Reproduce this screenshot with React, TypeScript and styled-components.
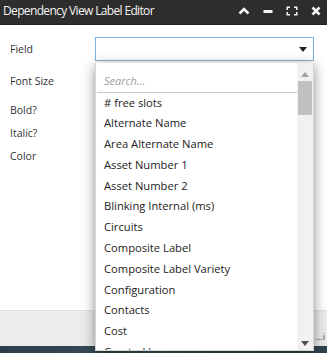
import React from "react";
import styled, { createGlobalStyle } from "styled-components";

const GlobalStyle = createGlobalStyle`
  html, body {
    margin: 0;
    padding: 0;
    height: 100%;
    overflow: hidden;
  }
  #root {
    height: 100%;
  }
  body {
    font-family: "Open Sans", "Noto Sans", sans-serif;
    color: #333;
  }
`;

const fields = [
  "# free slots",
  "Alternate Name",
  "Area Alternate Name",
  "Asset Number 1",
  "Asset Number 2",
  "Blinking Internal (ms)",
  "Circuits",
  "Composite Label",
  "Composite Label Variety",
  "Configuration",
  "Contacts",
  "Cost",
  "Created by",
];

const formRows = [
  { label: "Field", mt: 0, h: 24 },
  { label: "Font Size", mt: 9, h: 23 },
  { label: "Bold?", mt: 6, h: 23 },
  { label: "Italic?", mt: 0, h: 23 },
  { label: "Color", mt: 0, h: 23 },
];

function App() {
  return (
    <>
      <GlobalStyle />
      <Window>
        <TitleBar>
          <Title>Dependency View Label Editor</Title>
          <TitleIcons>
            <IconButton>
              <svg width="12" height="10" viewBox="0 0 12 10">
                <path d="M1.5 7.5 L6 3 L10.5 7.5" fill="none" stroke="#f2f2f2" strokeWidth="2.6" />
              </svg>
            </IconButton>
            <IconButton>
              <svg width="10" height="10" viewBox="0 0 10 10">
                <rect x="0.5" y="4" width="9" height="3" fill="#f2f2f2" />
              </svg>
            </IconButton>
            <IconButton>
              <svg width="12" height="10" viewBox="0 0 12 10">
                <path d="M0.5 0.5h3.5v1.5h-2v2h-1.5z M11.5 0.5h-3.5v1.5h2v2h1.5z M0.5 9.5h3.5v-1.5h-2v-2h-1.5z M11.5 9.5h-3.5v-1.5h2v-2h1.5z" fill="#f2f2f2" />
              </svg>
            </IconButton>
            <IconButton>
              <svg width="10" height="10" viewBox="0 0 10 10">
                <path d="M1.5 1.5 L8.5 8.5 M8.5 1.5 L1.5 8.5" stroke="#f2f2f2" strokeWidth="2.6" />
              </svg>
            </IconButton>
          </TitleIcons>
        </TitleBar>

        <Body>
          <Form>
            {formRows.map((r, i) => (
              <FormRow key={r.label} $mt={r.mt} $h={r.h}>
                <Label>{r.label}</Label>
                {i === 0 && (
                  <SelectBox>
                    <svg width="8" height="5" viewBox="0 0 8 5">
                      <path d="M0 0h8L4 5z" fill="#222" />
                    </svg>
                  </SelectBox>
                )}
              </FormRow>
            ))}
          </Form>

          <Dropdown>
            <ListArea>
              <SearchWrap>
                <SearchInput placeholder="Search..." />
              </SearchWrap>
              <Options>
                {fields.map((f) => (
                  <Option key={f}>{f}</Option>
                ))}
              </Options>
            </ListArea>
            <Scrollbar>
              <ScrollArrow>
                <svg width="8" height="5" viewBox="0 0 8 5">
                  <path d="M0 5h8L4 0z" fill="#a3a3a3" />
                </svg>
              </ScrollArrow>
              <Thumb />
              <TrackRest />
              <ScrollArrow>
                <svg width="8" height="5" viewBox="0 0 8 5">
                  <path d="M0 0h8L4 5z" fill="#505050" />
                </svg>
              </ScrollArrow>
            </Scrollbar>
          </Dropdown>
        </Body>

        <Footer>
          <FooterText>...i</FooterText>
        </Footer>
        <Taskbar />
      </Window>
    </>
  );
}

const Window = styled.div`
  height: 100%;
  display: flex;
  flex-direction: column;
  background: #fff;
`;

const TitleBar = styled.div`
  height: 25px;
  flex: none;
  display: flex;
  align-items: center;
  justify-content: space-between;
  background: #2d2d2d;
  border-bottom: 1px solid #1f1f1f;
  box-sizing: border-box;
  padding: 0 5px 0 3px;
`;

const Title = styled.div`
  color: #f4f4f4;
  font-size: 12px;
  letter-spacing: -0.65px;
  margin-top: -3px;
`;

const TitleIcons = styled.div`
  display: flex;
  align-items: center;
  gap: 12px;
  margin-top: -2px;
`;

const IconButton = styled.div`
  display: flex;
  align-items: center;
  justify-content: center;
  width: 12px;
  height: 12px;
`;

const Body = styled.div`
  flex: 1;
  position: relative;
  padding: 12px 13px 0 10px;
`;

const Form = styled.div`
  display: flex;
  flex-direction: column;
`;

const FormRow = styled.div<{ $mt: number; $h: number }>`
  display: flex;
  align-items: center;
  margin-top: ${(p) => p.$mt}px;
  height: ${(p) => p.$h}px;
`;

const Label = styled.div`
  width: 85px;
  font-size: 10.5px;
  color: #333;
  margin-top: -1px;
`;

const SelectBox = styled.div`
  flex: 1;
  height: 24px;
  box-sizing: border-box;
  border: 1px solid #7eb2dc;
  display: flex;
  align-items: center;
  justify-content: flex-end;
  padding-right: 6px;
`;

const Dropdown = styled.div`
  position: absolute;
  left: 95px;
  top: 38px;
  width: 219px;
  height: 288px;
  box-sizing: border-box;
  background: #fff;
  border: 1px solid #d6d6d6;
  border-top: none;
  display: flex;
  box-shadow: 0 3px 12px rgba(0, 0, 0, 0.45);
  overflow: hidden;
  z-index: 2;
`;

const ListArea = styled.div`
  flex: 1;
  display: flex;
  flex-direction: column;
  overflow: hidden;
  padding-top: 5px;
`;

const SearchWrap = styled.div`
  padding: 0 0 0 1px;
`;

const SearchInput = styled.input`
  width: 100%;
  box-sizing: border-box;
  height: 23px;
  border: none;
  border-bottom: 1px solid #c8c8c8;
  outline: none;
  font-family: "Open Sans", sans-serif;
  font-size: 11px;
  font-style: italic;
  padding: 0 0 0 7px;
  &::placeholder {
    color: #a0a0a0;
  }
`;

const Options = styled.div`
  display: flex;
  flex-direction: column;
`;

const Option = styled.div`
  height: 20.8px;
  line-height: 20.8px;
  padding-left: 8px;
  font-size: 11.2px;
  color: #222;
  white-space: nowrap;
`;

const Scrollbar = styled.div`
  width: 16px;
  flex: none;
  background: #f1f1f1;
  display: flex;
  flex-direction: column;
  align-items: center;
  padding-top: 4px;
`;

const ScrollArrow = styled.div`
  height: 14px;
  display: flex;
  align-items: center;
  justify-content: center;
`;

const Thumb = styled.div`
  width: 14px;
  height: 34px;
  background: #c1c1c1;
`;

const TrackRest = styled.div`
  flex: 1;
`;

const Footer = styled.div`
  height: 32px;
  flex: none;
  background: #ececec;
  border-top: 1px solid #e0e0e0;
  display: flex;
  align-items: flex-end;
  justify-content: flex-end;
  padding: 0 2px 3px 0;
`;

const FooterText = styled.div`
  font-size: 9px;
  color: #444;
`;

const Taskbar = styled.div`
  height: 7px;
  flex: none;
  background: linear-gradient(90deg, #2b3f4b, #3a505c 50%, #2f434f);
`;

export default App;
